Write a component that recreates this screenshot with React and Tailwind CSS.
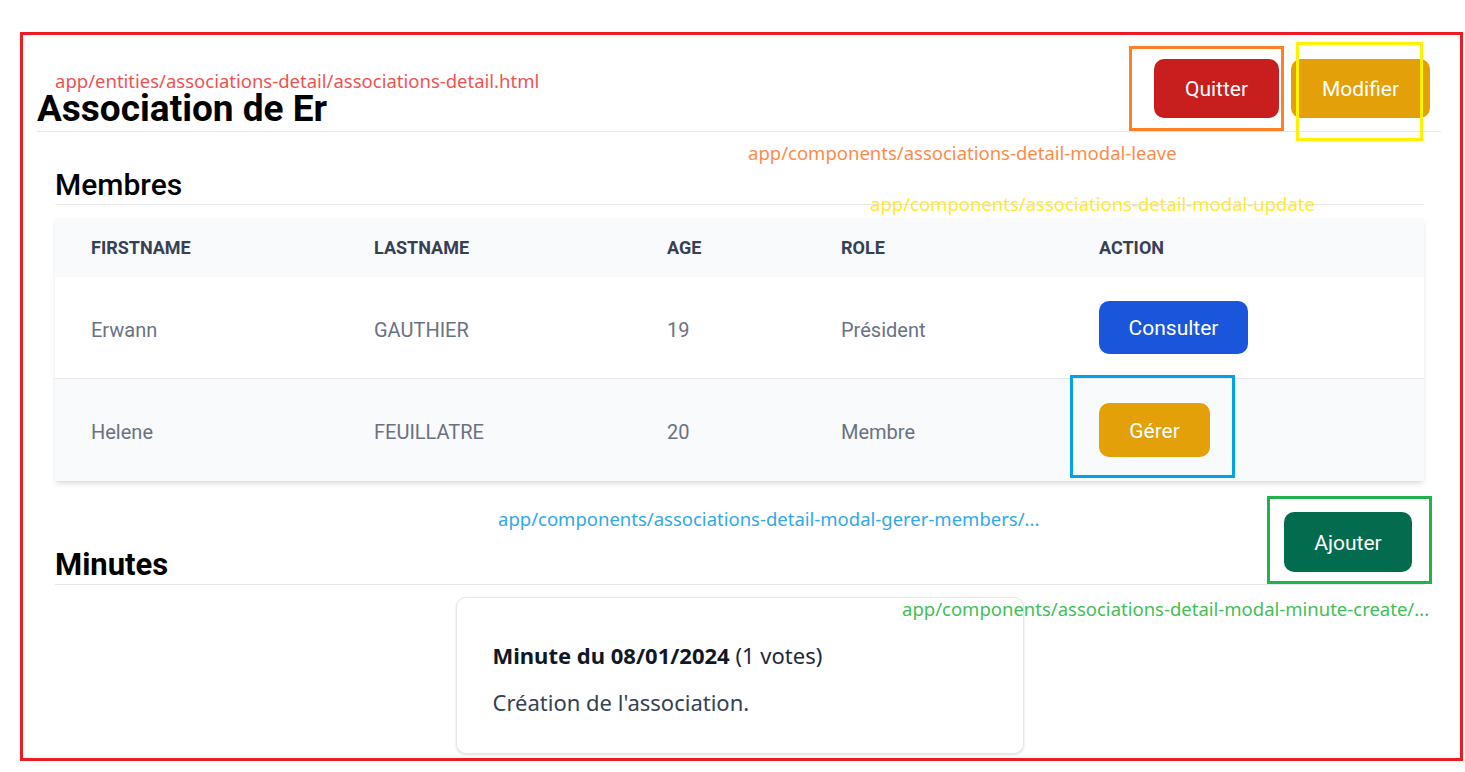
const members = [
  { firstname: 'Erwann', lastname: 'GAUTHIER', age: 19, role: 'Président', action: 'Consulter' },
  { firstname: 'Helene', lastname: 'FEUILLATRE', age: 20, role: 'Membre', action: 'Gérer' },
];

function Label({ className, children }) {
  return (
    <span className={`absolute whitespace-nowrap font-['Noto_Sans',sans-serif] text-[18.5px] leading-[20px] ${className}`}>{children}</span>
  );
}

function Box({ className }) {
  return <div className={`absolute border-[3px] pointer-events-none ${className}`} />;
}

export default function App() {
  return (
    <div className="relative min-h-[772px] bg-white pt-[32px] pl-[20px] font-['Roboto',sans-serif]">
      <div className="h-[729px] w-[1443px] border-[3px] border-[#ed1c24] pl-[14px] pr-[19px]">
        <div className="mt-[24px] flex items-start justify-between">
          <h1 className="mt-[31px] text-[37px] font-bold leading-none text-black">Association de Er</h1>
          <div className="mr-[11px] flex gap-3">
            <button className="h-[59px] w-[125px] rounded-[10px] bg-[#c81e1e] pt-[3px] text-[21px] text-white">Quitter</button>
            <button className="h-[59px] w-[139px] rounded-[10px] bg-[#e3a008] pt-[3px] text-[21px] text-white">Modifier</button>
          </div>
        </div>
        <div className="mt-[4px] border-t border-gray-200" />

        <div className="ml-[18px] mr-[17px]">
          <h2 className="mt-[36px] text-[30px] font-medium leading-[34px] text-black">Membres</h2>
          <div className="mt-[2px] border-t border-gray-200" />

          <div className="mt-[13px] shadow-md">
            <table className="w-full table-fixed text-left">
              <colgroup>
                <col className="w-[283px]" />
                <col className="w-[293px]" />
                <col className="w-[174px]" />
                <col className="w-[258px]" />
                <col />
              </colgroup>
              <thead className="bg-gray-50 text-[18px] font-bold uppercase leading-[23px] text-gray-700">
                <tr>
                  <th className="px-9 py-[18px]">Firstname</th>
                  <th className="px-9 py-[18px]">Lastname</th>
                  <th className="px-9 py-[18px]">Age</th>
                  <th className="px-9 py-[18px]">Role</th>
                  <th className="px-9 py-[18px]">Action</th>
                </tr>
              </thead>
              <tbody className="text-[20px] text-gray-500">
                {members.map((m, i) => (
                  <tr key={m.firstname} className={i === 0 ? 'border-b border-gray-200 bg-white' : 'bg-gray-50'}>
                    <td className="px-9 pt-[26px] pb-[22px]">{m.firstname}</td>
                    <td className="px-9 pt-[26px] pb-[22px]">{m.lastname}</td>
                    <td className="px-9 pt-[26px] pb-[22px]">{m.age}</td>
                    <td className="px-9 pt-[26px] pb-[22px]">{m.role}</td>
                    <td className="px-9 py-6">
                      {m.action === 'Consulter' ? (
                        <button className="h-[53px] w-[149px] rounded-[10px] bg-[#1a56db] pt-[3px] text-[21px] text-white">Consulter</button>
                      ) : (
                        <button className="h-[54px] w-[111px] rounded-[10px] bg-[#e3a008] pt-[3px] text-[21px] text-white">Gérer</button>
                      )}
                    </td>
                  </tr>
                ))}
              </tbody>
            </table>
          </div>

          <div className="mt-[31px] flex items-start justify-between">
            <h2 className="mt-[36px] text-[31px] font-bold leading-[34px] text-black">Minutes</h2>
            <button className="mr-[12px] h-[60px] w-[128px] rounded-[10px] bg-[#046c4e] pt-[4px] text-[21px] text-white">Ajouter</button>
          </div>
          <div className="mt-[2px] border-t border-gray-200" />

          <div className="mx-auto mt-[12px] w-[568px] rounded-[10px] border border-gray-200 bg-white px-9 pt-[43px] pb-[37px] font-['Noto_Sans',sans-serif] shadow">
            <p className="text-[22px] leading-[28px] text-gray-800">
              <span className="font-bold text-gray-900">Minute du 08/01/2024</span> (1 votes)
            </p>
            <p className="mt-[19px] text-[22px] leading-[28px] text-gray-700">Création de l'association.</p>
          </div>
        </div>
      </div>

      <Label className="left-[55px] top-[71px] text-[#f05252]">app/entities/associations-detail/associations-detail.html</Label>
      <Box className="left-[1129px] top-[46px] h-[85px] w-[155px] border-[#ff7f27]" />
      <Box className="left-[1296px] top-[42px] h-[99px] w-[127px] border-[#fff200]" />
      <Label className="left-[748px] top-[143px] text-[#fd8b4b]">app/components/associations-detail-modal-leave</Label>
      <Label className="left-[870px] top-[194px] text-[#ffea2e]">app/components/associations-detail-modal-update</Label>
      <Box className="left-[1070px] top-[375px] h-[103px] w-[165px] border-[#00a2e8]" />
      <Label className="left-[498px] top-[509px] text-[#31a8e6]">app/components/associations-detail-modal-gerer-members/...</Label>
      <Box className="left-[1267px] top-[496px] h-[88px] w-[165px] border-[#22b14c]" />
      <Label className="left-[902px] top-[599px] text-[#3fbf55]">app/components/associations-detail-modal-minute-create/...</Label>
    </div>
  );
}
